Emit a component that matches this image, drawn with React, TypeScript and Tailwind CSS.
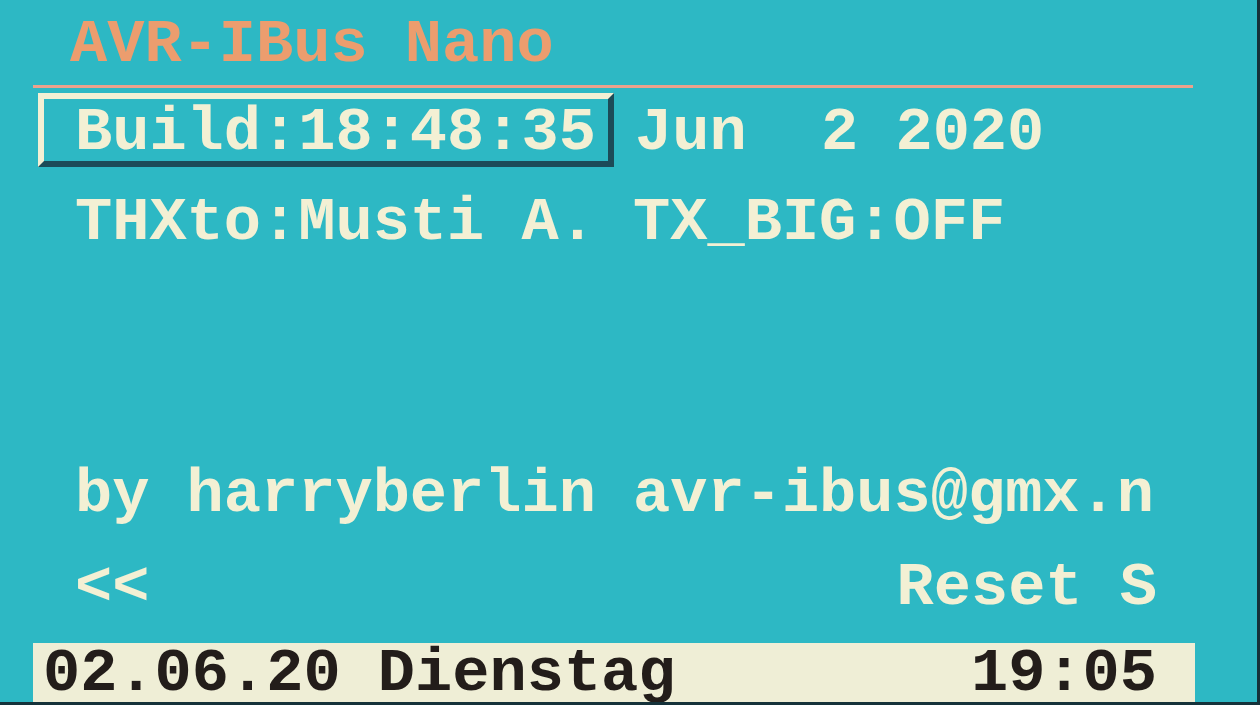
import React from "react"

// LCD info screen of the AVR-IBus Nano
const MONO = "font-['Liberation_Mono','DejaVu_Sans_Mono',monospace] font-bold text-[62px] whitespace-pre"

export default function App() {
  return (
    <div className={`${MONO} h-[705px] w-[1260px] overflow-hidden bg-[#2db8c4] border-r-[3px] border-b-[3px] border-[#15323a] flex flex-col text-[#f3f0d4]`}>
      {/* title */}
      <div className="mt-[14px] pl-[70px] leading-[62px] text-[#ec9d6e]">AVR-IBus Nano</div>
      <div className="mt-[9px] ml-[33px] h-[3px] w-[1160px] bg-[#eba28c]" />

      {/* build row */}
      <div className="mt-[5px] ml-[38px] flex items-start">
        <div className="w-[576px] h-[74px] border-[6px] border-t-[#f3f0d4] border-l-[#f3f0d4] border-b-[#1c4b58] border-r-[#1c4b58] pl-[31px] pt-[6px] leading-[56px]">
          Build:18:48:35
        </div>
        <div className="ml-[21px] pt-[12px] leading-[56px]">Jun  2 2020</div>
      </div>

      <div className="mt-[25px] pl-[75px] leading-[62px]">THXto:Musti A. TX_BIG:OFF</div>

      <div className="mt-[210px] pl-[75px] leading-[62px]">by harryberlin avr-ibus@gmx.n</div>

      <div className="mt-[31px] pl-[75px] pr-[100px] flex justify-between leading-[62px]">
        <span>&lt;&lt;</span>
        <span>Reset S</span>
      </div>

      {/* status bar */}
      <div className="mt-[24px] ml-[33px] w-[1162px] h-[59px] overflow-hidden bg-[#efeed6] text-[#231d1a] flex justify-between pl-[10px] pr-[38px] leading-[62px]">
        <span>02.06.20 Dienstag</span>
        <span>19:05</span>
      </div>
    </div>
  )
}
